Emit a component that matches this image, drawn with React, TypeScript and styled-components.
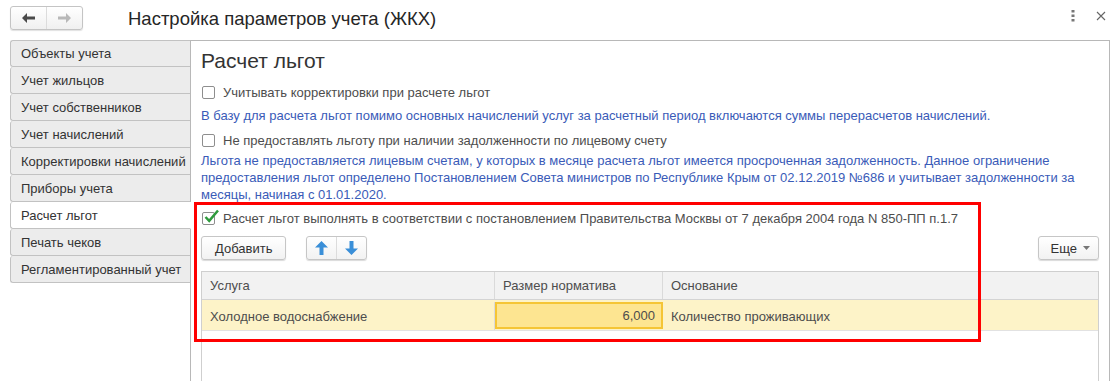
import React from "react";
import styled, { createGlobalStyle } from "styled-components";

const GlobalStyle = createGlobalStyle`
  html, body {
    margin: 0;
    padding: 0;
    background: #ffffff;
    font-family: "Liberation Sans", Arial, sans-serif;
    font-size: 13px;
    color: #4d4d4d;
  }
`;

const Page = styled.div`
  position: relative;
  width: 1116px;
  height: 381px;
  overflow: hidden;
  display: flex;
  flex-direction: column;
`;

const Header = styled.div`
  height: 40px;
  display: flex;
  align-items: flex-start;
  padding-left: 10px;
  box-sizing: border-box;
`;

const NavGroup = styled.div`
  margin-top: 6px;
  width: 73px;
  height: 24px;
  box-sizing: border-box;
  border: 1px solid #c4c4c4;
  border-radius: 3px;
  background: linear-gradient(#ffffff, #f0f0f0);
  box-shadow: 0 1px 1px rgba(0, 0, 0, 0.12);
  display: flex;
`;

const NavBtn = styled.div<{ $divider?: boolean }>`
  flex: 1;
  display: flex;
  align-items: center;
  justify-content: center;
  border-right: ${(p) => (p.$divider ? "1px solid #dcdcdc" : "none")};
`;

const Title = styled.div`
  margin-left: 45px;
  margin-top: 6px;
  font-size: 18.5px;
  line-height: 25px;
  color: #262626;
`;

const HeaderTools = styled.div`
  margin-left: auto;
  margin-top: 10px;
  margin-right: 10px;
  display: flex;
  align-items: center;
  gap: 21px;
`;

const Main = styled.div`
  flex: 1;
  display: flex;
  padding-left: 10px;
  padding-right: 6px;
`;

const TabList = styled.div`
  width: 180px;
  display: flex;
  flex-direction: column;
  border-right: 1px solid #b8b8b8;
  position: relative;
  z-index: 1;
`;

const Tab = styled.div<{ $active?: boolean }>`
  height: 27px;
  box-sizing: border-box;
  padding-left: 10px;
  display: flex;
  align-items: center;
  background: ${(p) => (p.$active ? "#ffffff" : "#ececec")};
  border-left: 1px solid #c2c2c2;
  border-right: ${(p) => (p.$active ? "1px solid #ffffff" : "none")};
  margin-right: ${(p) => (p.$active ? "-1px" : "0")};
  border-bottom: 1px solid #c2c2c2;
  border-radius: 3px 0 0 3px;
  color: #333333;
  white-space: nowrap;
  &:first-child {
    border-top: 1px solid #c2c2c2;
  }
`;

const Panel = styled.div`
  flex: 1;
  border-top: 1px solid #b8b8b8;
  border-right: 1px solid #b8b8b8;
  padding: 7px 10px 0 10px;
  display: flex;
  flex-direction: column;
`;

const Heading = styled.div`
  font-size: 21px;
  line-height: 26px;
  color: #333333;
`;

const CheckRow = styled.div<{ $mt: number }>`
  margin-top: ${(p) => p.$mt}px;
  height: 20px;
  display: flex;
  align-items: center;
  gap: 8px;
  padding-left: 1px;
  color: #4d4d4d;
`;

const Box = styled.div`
  position: relative;
  width: 13px;
  height: 13px;
  box-sizing: border-box;
  border: 1px solid #8e8e8e;
  border-radius: 2px;
  background: #ffffff;
  flex-shrink: 0;
`;

const Note = styled.div<{ $mt: number }>`
  margin-top: ${(p) => p.$mt}px;
  line-height: 17px;
  color: #3a5bb8;
`;

const Toolbar = styled.div`
  margin-top: 8px;
  height: 24px;
  display: flex;
  align-items: center;
`;

const Button = styled.div<{ $ml?: number }>`
  height: 24px;
  box-sizing: border-box;
  margin-left: ${(p) => p.$ml ?? 0}px;
  border: 1px solid #c6c6c6;
  border-radius: 3px;
  background: linear-gradient(#ffffff, #f2f2f2);
  box-shadow: 0 1px 1px rgba(0, 0, 0, 0.15);
  display: flex;
  align-items: center;
  color: #333333;
`;

const ButtonText = styled.div`
  padding: 0 13px;
`;

const ArrowCell = styled.div<{ $divider?: boolean }>`
  width: 29px;
  height: 100%;
  display: flex;
  align-items: center;
  justify-content: center;
  border-right: ${(p) => (p.$divider ? "1px solid #dcdcdc" : "none")};
`;

const MoreBtn = styled(Button)`
  margin-left: auto;
  padding: 0 8px 0 12px;
  gap: 6px;
`;

const Table = styled.div`
  margin-top: 11px;
  flex: 1;
  border: 1px solid #cfcfcf;
  border-bottom: none;
  display: flex;
  flex-direction: column;
`;

const Row = styled.div<{ $head?: boolean }>`
  display: grid;
  grid-template-columns: 293px 168px 1fr;
  height: ${(p) => (p.$head ? 28 : 31)}px;
  background: ${(p) => (p.$head ? "#f2f2f2" : "#fdf3c8")};
  border-bottom: 1px solid ${(p) => (p.$head ? "#d4d4d4" : "#e2e2e2")};
  box-sizing: border-box;
  padding-top: ${(p) => (p.$head ? 0 : 2)}px;
`;

const Cell = styled.div<{ $right?: boolean; $last?: boolean; $sel?: boolean }>`
  display: flex;
  align-items: center;
  justify-content: ${(p) => (p.$right ? "flex-end" : "flex-start")};
  padding: 0 ${(p) => (p.$sel ? 6 : 8)}px;
  border-right: ${(p) => (p.$last ? "none" : "1px solid #dadada")};
  color: #4d4d4d;
  box-sizing: border-box;
  ${(p) =>
    p.$sel &&
    `
    background: #fde591;
    border: 2px solid #f5c535;
    margin-bottom: 1px;
  `}
`;

const RedFrame = styled.div`
  position: absolute;
  left: 194px;
  top: 202px;
  width: 787px;
  height: 140px;
  box-sizing: border-box;
  border: 3px solid #ff0000;
  pointer-events: none;
`;

const tabs = [
  "Объекты учета",
  "Учет жильцов",
  "Учет собственников",
  "Учет начислений",
  "Корректировки начислений",
  "Приборы учета",
  "Расчет льгот",
  "Печать чеков",
  "Регламентированный учет",
];

const Check = () => (
  <svg
    width="17"
    height="17"
    viewBox="0 0 17 17"
    style={{ position: "absolute", left: 0, top: -5 }}
  >
    <path
      d="M2.5 9 L6.2 12.8 L15 2.5"
      fill="none"
      stroke="#2e9a3c"
      strokeWidth="2.5"
    />
  </svg>
);

const Arrow = ({ down }: { down?: boolean }) => (
  <svg width="13" height="14" viewBox="0 0 13 14">
    <polygon
      points="6.5,0 13,6.5 8.5,6.5 8.5,14 4.5,14 4.5,6.5 0,6.5"
      fill="#3a8fd8"
      transform={down ? "rotate(180 6.5 7)" : undefined}
    />
  </svg>
);

const App: React.FC = () => {
  return (
    <Page>
      <GlobalStyle />
      <Header>
        <NavGroup>
          <NavBtn $divider>
            <svg width="13" height="10" viewBox="0 0 13 10">
              <polygon points="0,5 5,0 5,3.5 13,3.5 13,6.5 5,6.5 5,10" fill="#4a4a4a" />
            </svg>
          </NavBtn>
          <NavBtn>
            <svg width="13" height="10" viewBox="0 0 13 10">
              <polygon points="13,5 8,0 8,3.5 0,3.5 0,6.5 8,6.5 8,10" fill="#b8b8b8" />
            </svg>
          </NavBtn>
        </NavGroup>
        <Title>Настройка параметров учета (ЖКХ)</Title>
        <HeaderTools>
          <svg width="4" height="12" viewBox="0 0 4 12">
            <rect x="0.5" y="0" width="3" height="2.5" fill="#777" />
            <rect x="0.5" y="4.5" width="3" height="2.5" fill="#777" />
            <rect x="0.5" y="9" width="3" height="2.5" fill="#777" />
          </svg>
          <svg width="10" height="10" viewBox="0 0 10 10">
            <path d="M1 1 L9 9 M9 1 L1 9" stroke="#666" strokeWidth="1.1" />
          </svg>
        </HeaderTools>
      </Header>
      <Main>
        <TabList>
          {tabs.map((t) => (
            <Tab key={t} $active={t === "Расчет льгот"}>
              {t}
            </Tab>
          ))}
        </TabList>
        <Panel>
          <Heading>Расчет льгот</Heading>
          <CheckRow $mt={8}>
            <Box />
            Учитывать корректировки при расчете льгот
          </CheckRow>
          <Note $mt={5}>
            В базу для расчета льгот помимо основных начислений услуг за расчетный период
            включаются суммы перерасчетов начислений.
          </Note>
          <CheckRow $mt={6}>
            <Box />
            Не предоставлять льготу при наличии задолженности по лицевому счету
          </CheckRow>
          <Note $mt={2}>
            Льгота не предоставляется лицевым счетам, у которых в месяце расчета льгот имеется
            просроченная задолженность. Данное ограничение
            <br />
            предоставления льгот определено Постановлением Совета министров по Республике Крым
            от 02.12.2019 №686 и учитывает задолженности за
            <br />
            месяцы, начиная с 01.01.2020.
          </Note>
          <CheckRow $mt={5}>
            <Box>
              <Check />
            </Box>
            Расчет льгот выполнять в соответствии с постановлением Правительства Москвы от 7
            декабря 2004 года N 850-ПП п.1.7
          </CheckRow>
          <Toolbar>
            <Button>
              <ButtonText>Добавить</ButtonText>
            </Button>
            <Button $ml={20}>
              <ArrowCell $divider>
                <Arrow />
              </ArrowCell>
              <ArrowCell>
                <Arrow down />
              </ArrowCell>
            </Button>
            <MoreBtn>
              Еще
              <svg width="7" height="4" viewBox="0 0 7 4">
                <polygon points="0,0 7,0 3.5,4" fill="#777" />
              </svg>
            </MoreBtn>
          </Toolbar>
          <Table>
            <Row $head>
              <Cell>Услуга</Cell>
              <Cell>Размер норматива</Cell>
              <Cell $last>Основание</Cell>
            </Row>
            <Row>
              <Cell>Холодное водоснабжение</Cell>
              <Cell $right $sel>
                6,000
              </Cell>
              <Cell $last>Количество проживающих</Cell>
            </Row>
          </Table>
        </Panel>
      </Main>
      <RedFrame />
    </Page>
  );
};

export default App;
